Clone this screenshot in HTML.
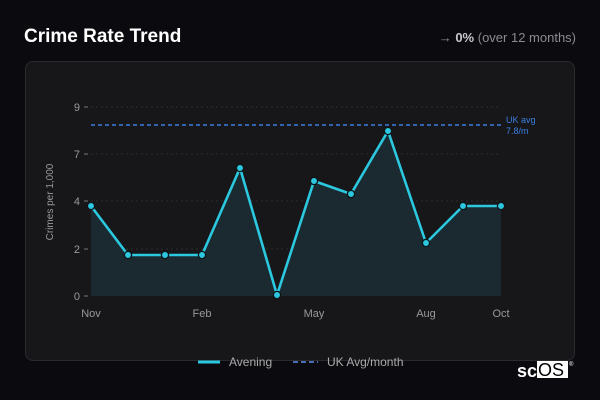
<!DOCTYPE html>
<html><head><meta charset="utf-8"><style>
body{margin:0;width:600px;height:400px;background:#0b0b0f;font-family:"Liberation Sans","DejaVu Sans",sans-serif;position:relative;overflow:hidden}
.t{position:absolute;left:24px;top:26px;color:#fff;font-weight:bold;font-size:19px;font-family:"Liberation Sans",sans-serif}
.r{position:absolute;right:24px;top:30px;color:#8a8a92;font-size:13px;font-family:"Liberation Sans",sans-serif}
.r b{color:#c8c8cc}
.card{position:absolute;left:25px;top:61px;width:548px;height:298px;border:1px solid #2a2a30;border-radius:8px;background:#17171a}
svg{position:absolute;left:0;top:0}
</style></head><body>
<div class="t">Crime Rate Trend</div>
<div class="r">→ <b>0%</b> (over 12 months)</div>
<div class="card"></div>
<svg width="600" height="400" font-family="Liberation Sans, sans-serif">
<g stroke="#2c2c30" stroke-dasharray="2,3" stroke-width="1">
<line x1="91" y1="107" x2="501" y2="107"/><line x1="91" y1="154" x2="501" y2="154"/><line x1="91" y1="201" x2="501" y2="201"/><line x1="91" y1="249" x2="501" y2="249"/></g>
<g stroke="#777" stroke-width="1"><line x1="84" y1="107" x2="88" y2="107"/><line x1="84" y1="154" x2="88" y2="154"/><line x1="84" y1="201" x2="88" y2="201"/><line x1="84" y1="249" x2="88" y2="249"/><line x1="84" y1="296" x2="88" y2="296"/></g>
<g fill="#999" font-size="11" text-anchor="end"><text x="80" y="111">9</text><text x="80" y="158">7</text><text x="80" y="205">4</text><text x="80" y="253">2</text><text x="80" y="300">0</text></g>
<text transform="translate(53,202) rotate(-90)" fill="#999" font-size="10" text-anchor="middle">Crimes per 1,000</text>
<g fill="#999" font-size="11" text-anchor="middle"><text x="91" y="317">Nov</text><text x="202" y="317">Feb</text><text x="314" y="317">May</text><text x="426" y="317">Aug</text><text x="501" y="317">Oct</text></g>
<polygon fill="#1a2a30" points="91,296 91,206 128,255 165,255 202,255 240,168 277,295 314,181 351,194 388,131 426,243 463,206 501,206 501,296"/>
<line x1="91" y1="125" x2="501" y2="125" stroke="#3b7fe0" stroke-width="1.6" stroke-dasharray="4,3"/>
<text x="506" y="123" fill="#3b7fe0" font-size="9">UK avg</text><text x="506" y="134" fill="#3b7fe0" font-size="9">7.8/m</text>
<polyline fill="none" stroke="#2bc8df" stroke-width="2.6" stroke-linejoin="round" points="91,206 128,255 165,255 202,255 240,168 277,295 314,181 351,194 388,131 426,243 463,206 501,206"/>
<g fill="#2bc8df" stroke="#0e1518" stroke-width="1.3">
<circle cx="91" cy="206" r="3.6"/><circle cx="128" cy="255" r="3.6"/><circle cx="165" cy="255" r="3.6"/><circle cx="202" cy="255" r="3.6"/><circle cx="240" cy="168" r="3.6"/><circle cx="277" cy="295" r="3.6"/><circle cx="314" cy="181" r="3.6"/><circle cx="351" cy="194" r="3.6"/><circle cx="388" cy="131" r="3.6"/><circle cx="426" cy="243" r="3.6"/><circle cx="463" cy="206" r="3.6"/><circle cx="501" cy="206" r="3.6"/></g>
<line x1="198" y1="362" x2="220" y2="362" stroke="#2bc8df" stroke-width="3"/>
<text x="229" y="366" fill="#aaa" font-size="12">Avening</text>
<line x1="293" y1="362" x2="318" y2="362" stroke="#5a8ee8" stroke-width="1.6" stroke-dasharray="5,3"/>
<text x="327" y="366" fill="#aaa" font-size="12">UK Avg/month</text>
<text x="517" y="377" fill="#fff" font-size="18" font-weight="bold" font-family="Liberation Sans, sans-serif">sc</text>
<rect x="537" y="361" width="31" height="17" fill="#fff"/>
<text x="538" y="376" fill="#000" font-size="18" font-family="Liberation Sans, sans-serif">OS</text>
<text x="569" y="366" fill="#fff" font-size="6">®</text>
</svg>
</body></html>
